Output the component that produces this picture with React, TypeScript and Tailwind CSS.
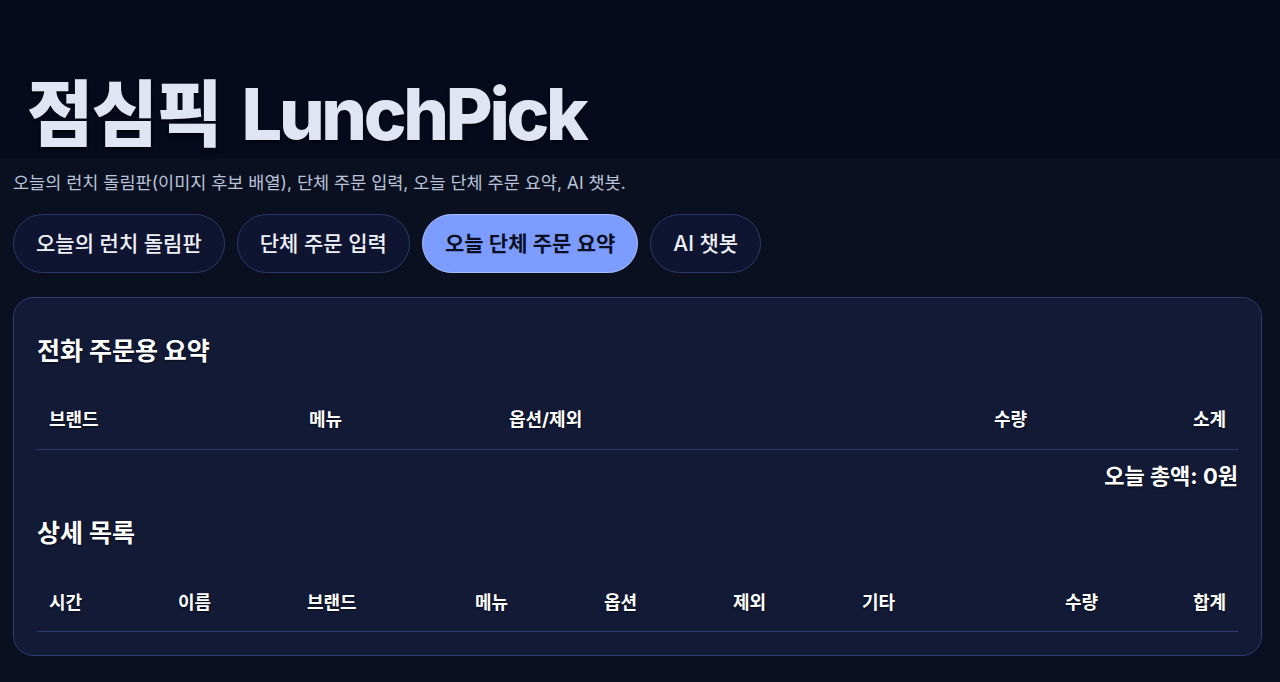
import React from "react";

const font = { fontFamily: 'Inter, "Noto Sans CJK KR", "Noto Sans", sans-serif' };

const th = "px-[12px] pt-[15px] leading-[26px] text-[18px] font-bold";

export default function App() {
  const tabs = ["오늘의 런치 돌림판", "단체 주문 입력", "오늘 단체 주문 요약", "AI 챗봇"];
  const active = 2;
  return (
    <div className="min-h-[682px] bg-[#0b1020] text-white" style={font}>
      <header className="h-[158px] bg-[#050a1d] flex items-end px-[27px] pb-[8px]">
        <h1 className="text-[72px] leading-none font-extrabold text-[#dfe5f2] [text-shadow:0_2px_3px_rgba(0,0,0,0.7)] whitespace-nowrap">
          <span className="tracking-[-1.5px]">점심픽 </span>
          <span className="ml-[6px] tracking-[-3.3px]">LunchPick</span>
        </h1>
      </header>
      <main className="pl-[13px] pr-[18px]">
        <p className="mt-[13px] text-[17.5px] leading-[24px] text-[#b9c3da]">
          오늘의 런치 돌림판(이미지 후보 배열), 단체 주문 입력, 오늘 단체 주문 요약, AI 챗봇.
        </p>
        <nav className="mt-[19px] flex gap-[12px]">
          {tabs.map((t, i) => (
            <button
              key={t}
              className={
                i === active
                  ? "h-[59px] px-[22px] rounded-full border border-[#a9bfff] bg-[#7c9dff] text-[#0a0f24] text-[21px] font-semibold whitespace-nowrap"
                  : "h-[59px] px-[22px] rounded-full border border-[#2c3a6b] bg-[#0f1531] text-[#eef1f8] text-[21px] font-medium whitespace-nowrap"
              }
            >
              {t}
            </button>
          ))}
        </nav>
        <section className="mt-[24px] rounded-[20px] border border-[#2c3b70] bg-[#121a36] px-[23px] pt-[37px] pb-[23px]">
          <h2 className="text-[25px] leading-[32px] font-bold [text-shadow:0_1px_2px_rgba(0,0,0,0.6)]">전화 주문용 요약</h2>
          <table className="mt-[25px] w-full table-fixed border-collapse [text-shadow:0_1px_2px_rgba(0,0,0,0.6)]">
            <colgroup>
              <col className="w-[260px]" />
              <col className="w-[200px]" />
              <col />
              <col className="w-[200px]" />
              <col className="w-[199px]" />
            </colgroup>
            <thead>
              <tr className="border-b border-[#2a3a6e]">
                <th className={`${th} pb-[16px] text-left`}>브랜드</th>
                <th className={`${th} pb-[16px] text-left`}>메뉴</th>
                <th className={`${th} pb-[16px] text-left`}>옵션/제외</th>
                <th className={`${th} pb-[16px] text-right`}>수량</th>
                <th className={`${th} pb-[16px] text-right`}>소계</th>
              </tr>
            </thead>
            <tbody></tbody>
          </table>
          <div className="mt-[11px] text-right text-[22px] leading-[30px] font-bold [text-shadow:0_1px_2px_rgba(0,0,0,0.6)]">
            오늘 총액: 0원
          </div>
          <h2 className="mt-[26px] text-[25px] leading-[32px] font-bold [text-shadow:0_1px_2px_rgba(0,0,0,0.6)]">상세 목록</h2>
          <table className="mt-[26px] w-full table-fixed border-collapse [text-shadow:0_1px_2px_rgba(0,0,0,0.6)]">
            <colgroup>
              <col className="w-[129px]" />
              <col className="w-[129px]" />
              <col className="w-[168px]" />
              <col className="w-[129px]" />
              <col className="w-[129px]" />
              <col className="w-[129px]" />
              <col />
              <col className="w-[131px]" />
              <col className="w-[128px]" />
            </colgroup>
            <thead>
              <tr className="border-b border-[#2a3a6e]">
                {["시간", "이름", "브랜드", "메뉴", "옵션", "제외", "기타"].map((h) => (
                  <th key={h} className={`${th} pb-[15px] text-left`}>{h}</th>
                ))}
                <th className={`${th} pb-[15px] text-right`}>수량</th>
                <th className={`${th} pb-[15px] text-right`}>합계</th>
              </tr>
            </thead>
            <tbody></tbody>
          </table>
        </section>
      </main>
    </div>
  );
}
